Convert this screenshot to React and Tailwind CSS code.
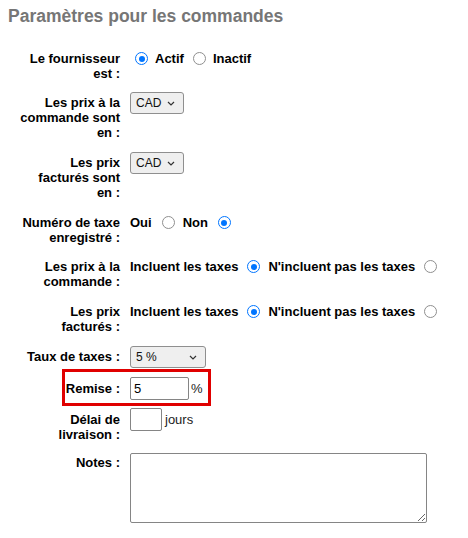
import React from "react"

const Radio = ({ checked, className = "" }) =>
  checked ? (
    <span
      className={`inline-flex h-[13px] w-[13px] shrink-0 items-center justify-center self-center rounded-full border-[1.5px] border-[#0075ff] bg-white ${className}`}
    >
      <span className="h-[6px] w-[6px] rounded-full bg-[#0075ff]" />
    </span>
  ) : (
    <span
      className={`inline-block h-[13px] w-[13px] shrink-0 self-center rounded-full border-[1.5px] border-[#8f8f8f] bg-white ${className}`}
    />
  )

const Select = ({ value, className = "" }) => (
  <div
    className={`flex h-[22px] items-center justify-between rounded-[3px] border border-[#8f8f8f] bg-[#efefef] pl-[5px] pr-[8px] text-[12px] font-normal leading-[15px] text-[#111] ${className}`}
  >
    <span>{value}</span>
    <svg width="8" height="5" viewBox="0 0 8 5">
      <path d="M1 1l3 3 3-3" stroke="#333" strokeWidth="1.2" fill="none" />
    </svg>
  </div>
)

const Label = ({ children, className = "w-[112px]" }) => (
  <div className={`shrink-0 whitespace-nowrap text-right font-bold leading-[15px] ${className}`}>{children}</div>
)

const App = () => {
  return (
    <div className="min-h-[538px] bg-white px-2 pt-[5px] text-[13px] text-black font-['Liberation_Sans',Arial,sans-serif]">
      <h2 className="text-[17.5px] font-bold leading-[22px] text-[#767676]">Paramètres pour les commandes</h2>

      <div className="mt-[24px] flex flex-col">
        {/* Le fournisseur */}
        <div className="flex h-[41px] items-baseline gap-[10px]">
          <Label>
            Le fournisseur
            <br />
            est :
          </Label>
          <div className="flex items-baseline font-bold leading-[15px]">
            <Radio checked className="ml-[5px] mr-[7px]" />
            <span>Actif</span>
            <Radio className="ml-[9px] mr-[7px]" />
            <span>Inactif</span>
          </div>
        </div>

        {/* Prix commande devise */}
        <div className="flex h-[60px] items-baseline gap-[10px]">
          <Label>
            Les prix à la
            <br />
            commande sont
            <br />
            en :
          </Label>
          <Select value="CAD" className="w-[54px]" />
        </div>

        {/* Prix facturés devise */}
        <div className="flex h-[63px] items-baseline gap-[10px]">
          <Label>
            Les prix
            <br />
            facturés sont
            <br />
            en :
          </Label>
          <Select value="CAD" className="w-[54px]" />
        </div>

        {/* Numéro de taxe */}
        <div className="flex h-[44px] items-baseline gap-[10px]">
          <Label>
            Numéro de taxe
            <br />
            enregistré :
          </Label>
          <div className="flex items-baseline font-bold leading-[15px]">
            <span>Oui</span>
            <Radio className="ml-[10px] mr-[8px]" />
            <span>Non</span>
            <Radio checked className="ml-[10px]" />
          </div>
        </div>

        {/* Prix commande taxes */}
        <div className="flex h-[45px] items-baseline gap-[10px]">
          <Label>
            Les prix à la
            <br />
            commande :
          </Label>
          <div className="flex items-baseline font-bold leading-[15px]">
            <span>Incluent les taxes</span>
            <Radio checked className="ml-[9px] mr-[8px]" />
            <span>N'incluent pas les taxes</span>
            <Radio className="ml-[9px]" />
          </div>
        </div>

        {/* Prix facturés taxes */}
        <div className="flex h-[42px] items-baseline gap-[10px]">
          <Label>
            Les prix
            <br />
            facturés :
          </Label>
          <div className="flex items-baseline font-bold leading-[15px]">
            <span>Incluent les taxes</span>
            <Radio checked className="ml-[9px] mr-[8px]" />
            <span>N'incluent pas les taxes</span>
            <Radio className="ml-[9px]" />
          </div>
        </div>

        {/* Taux de taxes */}
        <div className="flex h-[23px] items-baseline gap-[10px]">
          <Label>Taux de taxes :</Label>
          <Select value="5 %" className="w-[76px]" />
        </div>

        {/* Remise */}
        <div className="ml-[54px] flex h-[37px] w-[149px] items-baseline gap-[10px] border-[3px] border-[#e00000] pt-[5px]">
          <Label className="w-[55px]">Remise :</Label>
          <div className="flex items-center">
            <div className="flex h-[23px] w-[59px] items-center rounded-[2px] border border-[#858585] px-[3px] font-normal leading-[15px]">
              5
            </div>
            <span className="ml-[2px] font-normal text-[#222]">%</span>
          </div>
        </div>

        {/* Délai */}
        <div className="mt-[2px] flex h-[45px] items-baseline gap-[10px]">
          <Label>
            Délai de
            <br />
            livraison :
          </Label>
          <div className="flex items-baseline">
            <div className="flex h-[23px] w-[32px] items-center rounded-[2px] border border-[#858585] px-[3px] leading-[15px]">
              &nbsp;
            </div>
            <span className="ml-[3px] font-normal text-[#222]">jours</span>
          </div>
        </div>

        {/* Notes */}
        <div className="flex items-start gap-[10px]">
          <Label className="w-[112px] pt-[2px]">Notes :</Label>
          <textarea
            className="h-[70px] w-[297px] resize rounded-[2px] border border-[#858585] bg-white"
            readOnly
          />
        </div>
      </div>
    </div>
  )
}

export default App
